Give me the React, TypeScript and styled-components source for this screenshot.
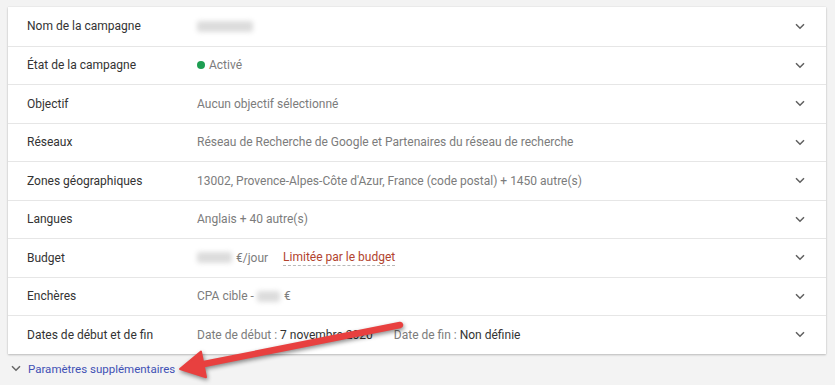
import React from "react";
import styled, { createGlobalStyle } from "styled-components";

const Global = createGlobalStyle`
  html, body { margin: 0; padding: 0; background: #f3f3f3; }
  body { font-family: Roboto, "Noto Sans", Arial, sans-serif; -webkit-font-smoothing: antialiased; }
`;

const Page = styled.div`
  position: relative;
  width: 835px;
  height: 385px;
  padding: 7px 9px 0 8px;
  box-sizing: border-box;
  overflow: hidden;
`;

const Card = styled.div`
  background: #fff;
  box-shadow: 0 1px 2px rgba(0, 0, 0, 0.22), 0 0 1px rgba(0, 0, 0, 0.12);
  display: flex;
  flex-direction: column;
`;

const Row = styled.div`
  height: 38.5px;
  box-sizing: border-box;
  display: grid;
  grid-template-columns: 189px 1fr 32px;
  align-items: center;
  border-top: 1px solid #e6e6e6;
  &:first-child { border-top: none; }
  font-size: 12px;
`;

const Label = styled.div`
  padding-left: 19px;
  color: #333;
`;

const Value = styled.div`
  display: flex;
  align-items: center;
  color: #7c7c7c;
  white-space: nowrap;
`;

const Strong = styled.span`
  color: #333;
`;

const Blur = styled.span<{ w: number }>`
  display: inline-block;
  width: ${(p) => p.w}px;
  height: 11px;
  background: #dcdcdc;
  filter: blur(2.5px);
  border-radius: 3px;
`;

const Dot = styled.span`
  width: 8px;
  height: 8px;
  border-radius: 50%;
  background: #1e9e52;
  margin-right: 4px;
`;

const Warn = styled.span`
  color: #b2432e;
  border-bottom: 1px dashed #b9b9b9;
  line-height: 15px;
  margin-left: 15px;
`;

const Gap = styled.span<{ w: number }>`
  display: inline-block;
  width: ${(p) => p.w}px;
`;

const ChevronCell = styled.div`
  display: flex;
  align-items: center;
  justify-content: flex-start;
  padding-left: 1px;
`;

const Chevron = ({ color = "#5f5f5f" }: { color?: string }) => (
  <svg width="10" height="7" viewBox="0 0 10 7">
    <path d="M1 1.2 L5 5.2 L9 1.2" fill="none" stroke={color} strokeWidth="1.5" />
  </svg>
);

const More = styled.div`
  display: flex;
  align-items: center;
  gap: 7px;
  height: 30px;
  padding-left: 3px;
  font-size: 11.5px;
  color: #3f51b5;
`;

const Arrow = styled.svg`
  position: absolute;
  left: 170px;
  top: 310px;
  overflow: visible;
  filter: drop-shadow(1px 2px 2px rgba(0, 0, 0, 0.45));
`;

const rows: { label: string; value: React.ReactNode }[] = [
  { label: "Nom de la campagne", value: <Blur w={56} /> },
  {
    label: "État de la campagne",
    value: (
      <>
        <Dot />
        Activé
      </>
    ),
  },
  { label: "Objectif", value: "Aucun objectif sélectionné" },
  { label: "Réseaux", value: "Réseau de Recherche de Google et Partenaires du réseau de recherche" },
  {
    label: "Zones géographiques",
    value: "13002, Provence-Alpes-Côte d'Azur, France (code postal) + 1450 autre(s)",
  },
  { label: "Langues", value: "Anglais + 40 autre(s)" },
  {
    label: "Budget",
    value: (
      <>
        <Blur w={35} />
        <Gap w={4} />
        €/jour
        <Warn>Limitée par le budget</Warn>
      </>
    ),
  },
  {
    label: "Enchères",
    value: (
      <>
        CPA cible -&nbsp;
        <Blur w={23} />
        <Gap w={4} />€
      </>
    ),
  },
  {
    label: "Dates de début et de fin",
    value: (
      <>
        Date de début :&nbsp;<Strong>7 novembre 2020</Strong>
        <Gap w={21} />
        Date de fin :&nbsp;<Strong>Non définie</Strong>
      </>
    ),
  },
];

export default function App() {
  return (
    <>
      <Global />
      <Page>
        <Card>
          {rows.map((r) => (
            <Row key={r.label}>
              <Label>{r.label}</Label>
              <Value>{r.value}</Value>
              <ChevronCell>
                <Chevron />
              </ChevronCell>
            </Row>
          ))}
        </Card>
        <More>
          <Chevron color="#666" />
          Paramètres supplémentaires
        </More>
        <Arrow width="240" height="70" viewBox="0 0 240 70">
          <path d="M230 15 L34 54" stroke="#e8403f" strokeWidth="6.5" strokeLinecap="round" fill="none" />
          <path d="M10 59 L31 41.6 L36 67.2 Z" fill="#e8403f" stroke="#e8403f" strokeWidth="2" strokeLinejoin="round" />
        </Arrow>
      </Page>
    </>
  );
}
